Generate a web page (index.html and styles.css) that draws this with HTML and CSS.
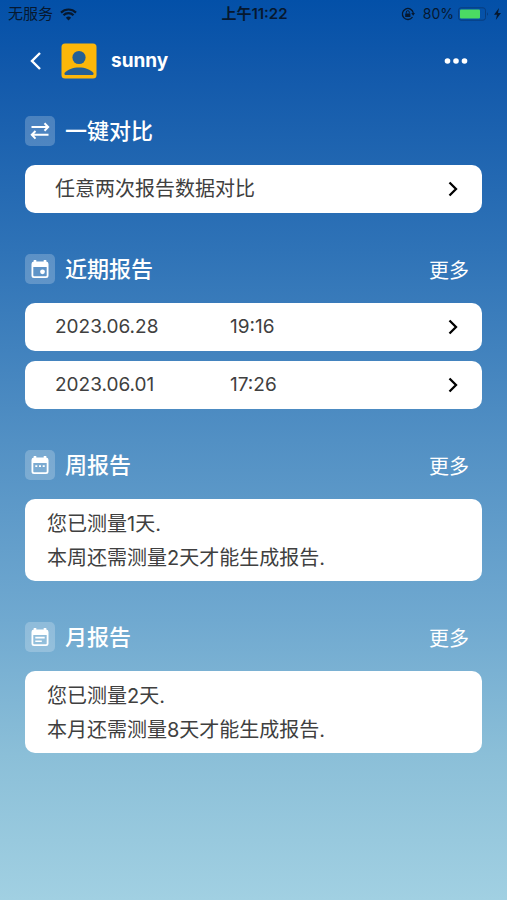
FILE: index.html
```html
<!DOCTYPE html>
<html lang="zh-CN">
<head>
<meta charset="utf-8">
<meta name="viewport" content="width=device-width, initial-scale=1">
<title>sunny</title>
<link rel="stylesheet" href="styles.css">
</head>
<body>
<div class="status">
  <div class="status-left">
    <span>无服务</span>
    <svg width="17" height="13" viewBox="0 0 17 13" aria-hidden="true"><path d="M8.500 12.500 5.900 9.700a3.700 3.700 0 0 1 5.200 0z" fill="currentColor"/><path d="M3.500 7.300a7 7 0 0 1 10 0M1 4.600a10.600 10.600 0 0 1 15 0" fill="none" stroke="currentColor" stroke-width="2.200"/></svg>
  </div>
  <span class="clock">上午11:22</span>
  <div class="status-right">
    <svg width="14" height="14" viewBox="0 0 14 14" aria-hidden="true"><path d="M11.500 10A5.500 5.500 0 1 1 12.300 6" fill="none" stroke="currentColor" stroke-width="1.300"/><path d="M10.200 6H14l-1.800 2.800z" fill="currentColor"/><path d="M4.200 6.500h5.200V10H4.200z" fill="currentColor"/><path d="M5.300 6.500V5.200a1.500 1.500 0 0 1 3 0v1.300" fill="none" stroke="currentColor"/></svg>
    <span class="percent">80%</span>
    <svg width="32" height="14" viewBox="0 0 32 14" aria-hidden="true"><rect x=".5" y=".8" width="27" height="12.400" rx="2.500" fill="none" stroke="#083d7e"/><rect x="2" y="2.500" width="20" height="9" rx="1" fill="#4bdb63"/><path d="M29 5.200q2 1.800 0 3.600z" fill="#083d7e"/></svg>
    <svg width="7" height="12" viewBox="0 0 7 12" aria-hidden="true"><path d="M5 0 0 6.700h3L1.800 12 7 5.100H4z" fill="currentColor"/></svg>
  </div>
</div>

<header class="topbar">
  <button class="icon-button" type="button" aria-label="返回"><svg width="12" height="20" viewBox="0 0 12 20"><path d="M10 2 2 10l8 8" fill="none" stroke="#fff" stroke-width="2.400"/></svg></button>
  <svg class="avatar" width="36" height="36" viewBox="0 0 36 36" aria-hidden="true"><rect x=".5" y=".5" width="35" height="35" rx="3.500" fill="#fdb709"/><circle cx="18" cy="14.500" r="6.600" fill="#245f96"/><path d="M3.500 31v-1C6.500 26.500 12 24.500 18 24.500S29.500 26.500 32.500 30v1q0 1-1 1h-27q-1 0-1-1z" fill="#245f96"/></svg>
  <h1 class="name">sunny</h1>
  <button class="icon-button more" type="button" aria-label="菜单"><svg width="24" height="20" viewBox="0 0 24 20" fill="#fff"><circle cx="3.500" cy="10" r="2.800"/><circle cx="12" cy="10" r="2.800"/><circle cx="20.500" cy="10" r="2.800"/></svg></button>
</header>

<main class="content">
  <section class="section">
    <div class="head">
      <span class="badge"><svg width="20" height="20" viewBox="0 0 20 20" aria-hidden="true" fill="none" stroke="#fff" stroke-width="2"><path d="M1.500 6H18M14.500 2.200 18.200 6l-3.700 3.800M18.500 13.800H2M5.500 10 1.800 13.800l3.700 3.800"/></svg></span>
      <h2 class="title">一键对比</h2>
    </div>
    <a class="card row" href="#compare"><span>任意两次报告数据对比</span><svg class="chevron" width="10" height="16" viewBox="0 0 10 16" aria-hidden="true"><path d="m1.500 1.500 6.500 6.500-6.500 6.500" /></svg></a>
  </section>

  <section class="section">
    <div class="head">
      <span class="badge"><svg width="20" height="20" viewBox="0 0 20 20" aria-hidden="true"><path fill-rule="evenodd" d="M3.700 1h2.600v1.500h7.400V1h2.600v1.500q2.200 0 2.200 2.500v11.500q0 2.500-2.500 2.500H4Q1.500 19 1.500 16.500V5q0-2.500 2.200-2.500zM3.300 8v8.500q0 .8.800.8h11.800q.8 0 .8-.8V8z" fill="#fff"/><circle cx="12.500" cy="12.800" r="2.400" fill="#fff"/></svg></span>
      <h2 class="title">近期报告</h2>
      <a class="all" href="#recent">更多</a>
    </div>
    <div class="rows">
      <a class="card row" href="#r0628"><span class="date">2023.06.28</span><span>19:16</span><svg class="chevron" width="10" height="16" viewBox="0 0 10 16" aria-hidden="true"><path d="m1.500 1.500 6.500 6.500-6.500 6.500"/></svg></a>
      <a class="card row" href="#r0601"><span class="date">2023.06.01</span><span>17:26</span><svg class="chevron" width="10" height="16" viewBox="0 0 10 16" aria-hidden="true"><path d="m1.500 1.500 6.500 6.500-6.500 6.500"/></svg></a>
    </div>
  </section>

  <section class="section">
    <div class="head">
      <span class="badge"><svg width="20" height="20" viewBox="0 0 20 20" aria-hidden="true"><path fill-rule="evenodd" d="M3.700 1h2.600v1.500h7.400V1h2.600v1.500q2.200 0 2.200 2.500v11.500q0 2.500-2.500 2.500H4Q1.500 19 1.500 16.500V5q0-2.500 2.200-2.500zM3.300 8v8.500q0 .8.800.8h11.800q.8 0 .8-.8V8z" fill="#fff"/><path d="M5.300 10.200h2v1.700h-2zM9 10.200h2v1.700H9zM12.700 10.200h2v1.700h-2z" fill="#fff"/></svg></span>
      <h2 class="title">周报告</h2>
      <a class="all" href="#week">更多</a>
    </div>
    <div class="card note"><p>您已测量1天.</p><p>本周还需测量2天才能生成报告.</p></div>
  </section>

  <section class="section">
    <div class="head">
      <span class="badge"><svg width="20" height="20" viewBox="0 0 20 20" aria-hidden="true"><path fill-rule="evenodd" d="M3.700 1h2.600v1.500h7.400V1h2.600v1.500q2.200 0 2.200 2.500v11.500q0 2.500-2.500 2.500H4Q1.500 19 1.500 16.500V5q0-2.500 2.200-2.500zM3.300 8v8.500q0 .8.800.8h11.800q.8 0 .8-.8V8z" fill="#fff"/><path d="M5.300 9.800h9.400v1.600H5.300zM5.300 13.400h6.500V15H5.300z" fill="#fff"/></svg></span>
      <h2 class="title">月报告</h2>
      <a class="all" href="#month">更多</a>
    </div>
    <div class="card note"><p>您已测量2天.</p><p>本月还需测量8天才能生成报告.</p></div>
  </section>
</main>
</body>
</html>
```

FILE: styles.css
```css
* {
  box-sizing: border-box;
}

html {
  min-height: 100%;
  background: linear-gradient(#0350a8 0%, #1259ab 8%, #2f73b7 28%, #5290c4 49%, #70a9d0 69%, #8bbfd8 84%, #a1d0e2 100%);
}

body {
  margin: 0;
  font-family: Inter, "Noto Sans CJK SC", sans-serif;
  font-size: 20px;
  color: #404040;
}

h1, h2, p {
  margin: 0;
}

a {
  color: inherit;
  text-decoration: none;
}

svg {
  display: block;
  flex: none;
}

.status {
  display: grid;
  grid-template-columns: 1fr auto 1fr;
  align-items: center;
  height: 28px;
  padding: 0 6px 0 8px;
  font-size: 15px;
  line-height: 20px;
  color: #06182f;
}

.status-left,
.status-right {
  display: flex;
  align-items: center;
  gap: 7px;
}

.status-right {
  justify-content: flex-end;
  gap: 4px;
}

.percent {
  margin-left: 4px;
  font-size: 14px;
}

.clock {
  font-weight: 600;
}

.topbar {
  display: flex;
  align-items: center;
  height: 66px;
  padding: 0 35px 0 26px;
}

.icon-button {
  display: flex;
  justify-content: center;
  padding: 0 4px;
  border: 0;
  background: none;
}

.avatar {
  margin-left: 15px;
}

.name {
  margin-left: 14px;
  font-size: 19px;
  line-height: 28px;
  font-weight: 700;
  color: #fff;
}

.more {
  margin-left: auto;
}

.content {
  display: flex;
  flex-direction: column;
  gap: 41px;
  padding: 22px 25px 40px;
}

.section {
  display: flex;
  flex-direction: column;
  gap: 19px;
}

.head {
  display: flex;
  align-items: center;
  height: 30px;
  padding-right: 13px;
  color: #fff;
}

.badge {
  display: grid;
  place-items: center;
  width: 30px;
  height: 30px;
  border-radius: 5px;
  background: rgba(255, 255, 255, 0.22);
}

.title {
  margin-left: 10px;
  font-size: 22px;
  line-height: 30px;
  font-weight: 500;
}

.all {
  margin-left: auto;
  padding-top: 3px;
  font-size: 20px;
  line-height: 30px;
}

.card {
  border-radius: 10px;
  background: #fff;
}

.rows {
  display: flex;
  flex-direction: column;
  gap: 10px;
}

.row {
  display: flex;
  align-items: center;
  height: 48px;
  padding: 0 24px 0 30px;
  line-height: 28px;
}

.rows .row {
  font-size: 19px;
}

.date {
  width: 175px;
}

.chevron {
  margin-left: auto;
  fill: none;
  stroke: #000;
  stroke-width: 2.3;
}

.note {
  padding: 8px 22px 6px;
  line-height: 34px;
}
```
